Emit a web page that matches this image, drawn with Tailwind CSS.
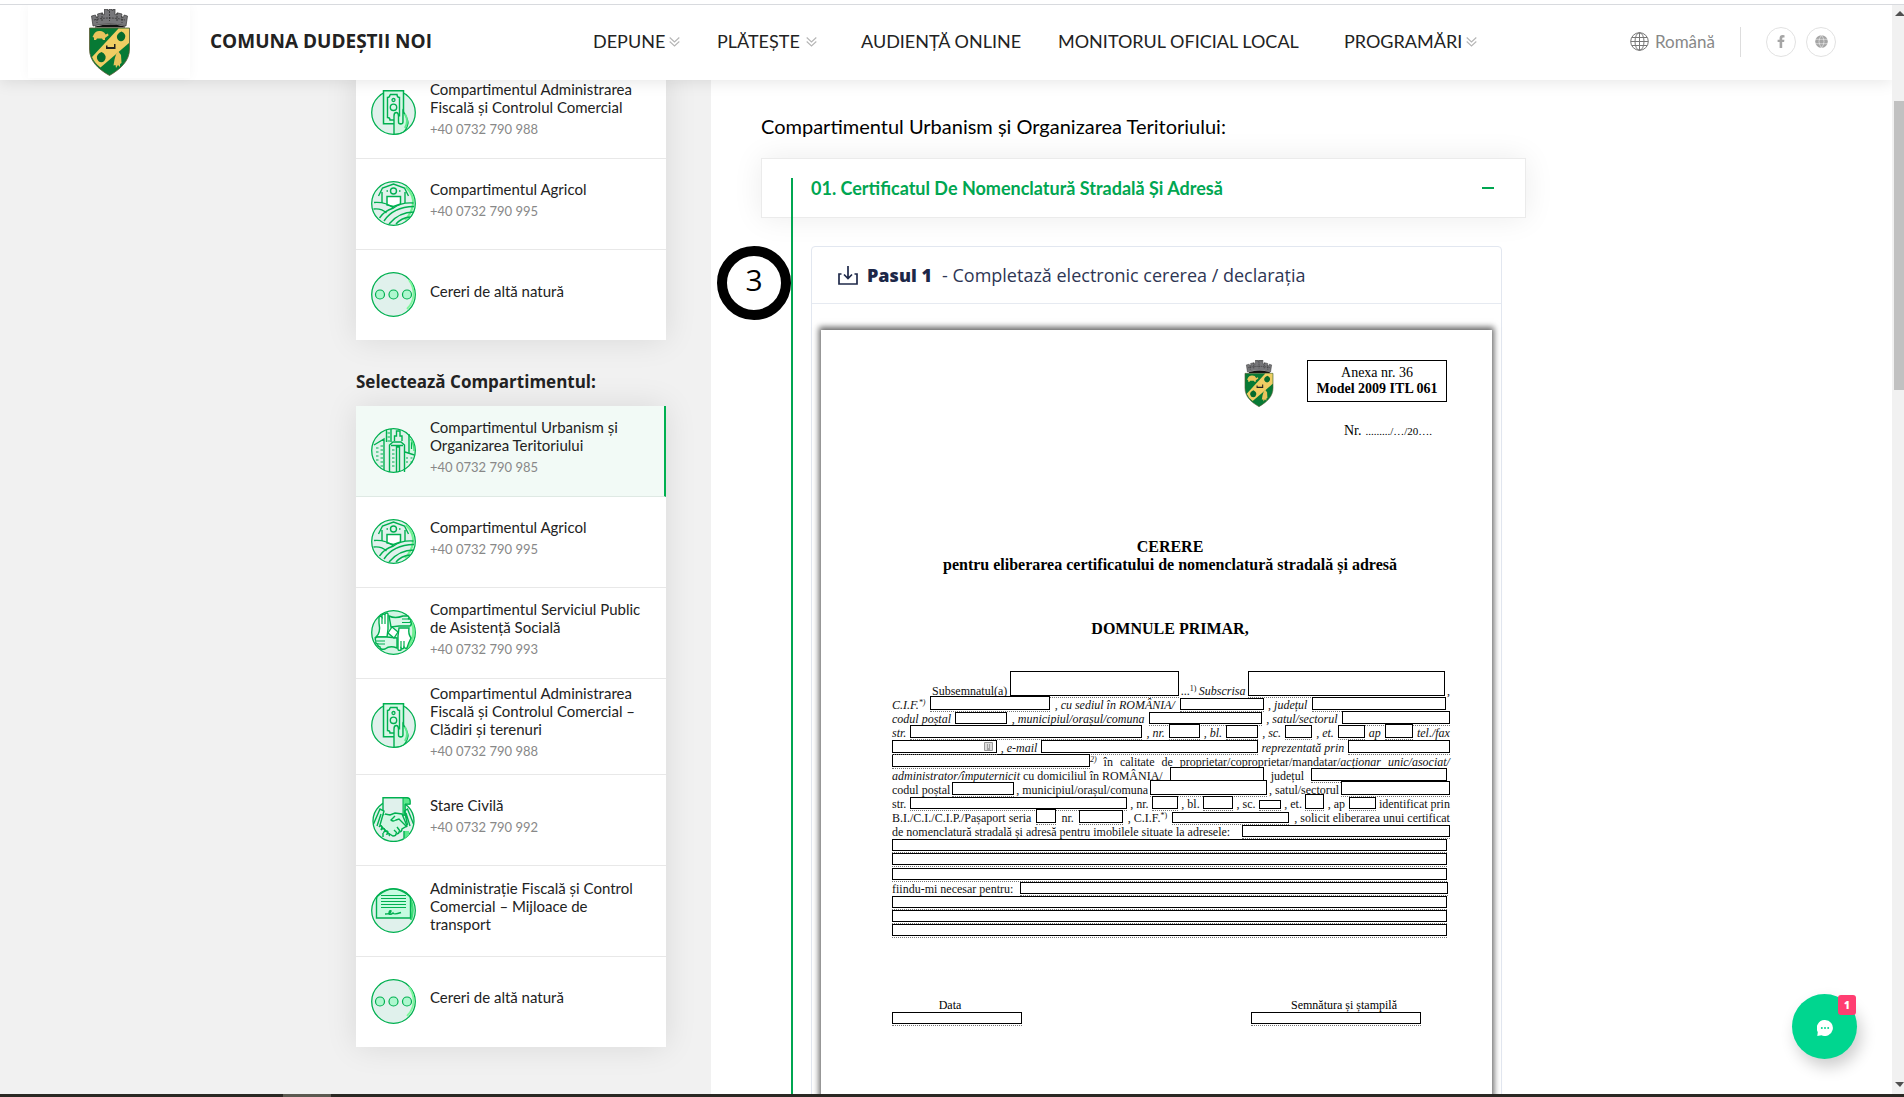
<!DOCTYPE html>
<html lang="ro">
<head>
<meta charset="utf-8">
<meta name="viewport" content="width=device-width, initial-scale=1">
<title>Comuna Dudeștii Noi</title>
<script src="https://cdn.jsdelivr.net/npm/@tailwindcss/browser@4"></script>
</head>
<body class="bg-white font-[Lato,sans-serif] text-[#222]">

<svg class="hidden" aria-hidden="true">
  <symbol id="coat" viewBox="0 0 41 67">
    <path d="M4 17 2.500 7l4-1 .6 2.500 2-.4L8.500 5l5-1.200.6 2 1.400-.2V0h3v1.500h1.500V0h3v1.500H24V0h2v5.600l1.600.2.500-2L33 5l-.6 3 2 .5.700-2.500 3.400 1L37 17Q20 13 4 17Z" fill="#77777a" stroke="#333" stroke-width=".7"/>
    <path d="M5 11q15-4 31 0M13 4v9M20.500 2v10M28 4v9M8 7v7M33 7v7" stroke="#2f2f2f" stroke-width=".8" fill="none" stroke-dasharray="2 1"/>
    <path d="M6 17.500q15-4 30 0v1H6z" fill="#111"/>
    <path d="M.5 19h40v21c0 12-9 20-20 26.500C9 60 .5 52 .5 40Z" fill="#077a35" stroke="#5d5a33" stroke-width=".8"/>
    <path d="M29.500 19.400H40V34L11.500 58.500Q5.500 54 3 48Z" fill="#f0cd63"/>
    <path d="M5 25q2-3.500 6-3 4 0 5.500 3.500l2.500-1 .5 2-3.500 2.500v2h-2l-1-1.500H8L7 31H5v-2.500L3.500 28Z" fill="#e9c45c"/>
    <path d="M32.500 22.500q5 2.500 3.500 6.500-1 3-4 3.200-3-.2-4-3.200-1-4 4.500-6.500ZM12.500 43q5 2.500 4 6.500-1 3.500-4.200 3.700-3.300-.2-4.300-3.700-1-4 4.500-6.500Z" fill="#056b2e"/>
    <path d="M17 36.500h1.500v1.500H25v-3h1.500v5H17Z" fill="#222"/>
    <path d="m29 42 3 4 .5 8-1.500 1v3l-2-2-2 3-.5-3-2 .5 1-6 1.500-5Z" fill="#e9c45c"/>
  </symbol>
  <symbol id="ic-money" viewBox="0 0 45 45">
    <circle cx="22.500" cy="22.500" r="21.800" fill="#e0f1ec" stroke="#00b050" stroke-width="1.300"/>
    <path d="M12.500.8h20v33h-20z" fill="#d6f8e6" stroke="#00b050" stroke-width="1.500"/>
    <path d="M19 4.500h7c0 2 1 3 2.500 3v19M19 4.500c0 2-1 3-2.500 3v20c1.500 0 2.500 1 2.500 2.500h4" fill="#e0f1ec" stroke="#00b050" stroke-width="1.400"/>
    <circle cx="22.500" cy="10" r="1.500" fill="none" stroke="#00b050" stroke-width="1.300"/><circle cx="22.500" cy="17.300" r="3.200" fill="none" stroke="#00b050" stroke-width="1.400"/>
    <path d="M23 44V26q0-3.500 2.200-3.500T27.500 26v6q0 2 2.200 2t2.300-2V21q5 8 5 12-1 6-4.500 9-4 2.500-9.500 2Z" fill="#d2f5e2" stroke="#00b050" stroke-width="1.400"/>
    <path d="M34 24q4 7 0 14" fill="none" stroke="#5de88c" stroke-width="2"/>
  </symbol>
  <symbol id="ic-farm" viewBox="0 0 45 45">
    <circle cx="22.500" cy="22.500" r="21.800" fill="#e0f1ec" stroke="#00b050" stroke-width="1.300"/>
    <path d="M35 6q8 8 7 17t-8 16" fill="none" stroke="#6ff090" stroke-width="2.200"/>
    <path d="M11 22V11M7.500 15l4-8L22.500 3l11 4 4 8M34 22V11" fill="none" stroke="#00b050" stroke-width="1.400"/>
    <circle cx="22.500" cy="10" r="3" fill="#e0f1ec" stroke="#00b050" stroke-width="1.400"/>
    <path d="M15.500 10h1.500M28 10h1.500" stroke="#00b050" stroke-width="1.300"/>
    <path d="M16 24v-8.500h13.500V23l-7 2.500Z" fill="#fff" stroke="#00b050" stroke-width="1.500"/>
    <path d="M3 21.500q11-1 19.500 5.500 8-6 20-5M2.500 28q8-1 13 4M22.500 27Q13 30 8.500 37M43 25.500Q22 26 13 40M43 31q-15 0-25 12M39 36q-9 1-14 7" fill="none" stroke="#00b050" stroke-width="1.400"/>
  </symbol>
  <symbol id="ic-dots" viewBox="0 0 45 45">
    <circle cx="22.500" cy="22.500" r="21.800" fill="#e0f1ec" stroke="#00b050" stroke-width="1.300"/>
    <path d="M38 8q5 7 4.500 15T36 37" fill="none" stroke="#7df79b" stroke-width="1.800"/>
    <g fill="#aef7cf" stroke="#00b050" stroke-width="1.200"><circle cx="9" cy="22.500" r="4.500"/><circle cx="22.500" cy="22.500" r="4.500"/><circle cx="36" cy="22.500" r="4.500"/></g>
  </symbol>
  <symbol id="ic-city" viewBox="0 0 45 45">
    <circle cx="22.500" cy="22.500" r="21.800" fill="#dff3ea" stroke="#00b050" stroke-width="1.300"/>
    <path d="M16 2h5v14h-5zM37 8l6 9v8h-6z" fill="#d2f7e2"/>
    <path d="M15.500 1.500V14M20 1v13M38 6v19M3 17l10-6v31M18.500 44V17l3.500-3h8l3.500 3v27M23.500 13V8h2V3h3.500v5h2v5M20 17.500h12M25.500 44V19h3v25M34 24l9.500 3" fill="none" stroke="#00b050" stroke-width="1.400"/>
    <path d="M5 20h2.500M5 24h2.500M5 28h2.500M5 32h2.500M9.500 18h2.500M9.500 22h2.500M9.500 26h2.500M9.500 30h2.500M9.500 34h2.500M9.500 38h2.500M16.500 5h2.500M16.500 9h2.500M16.500 13h2.500M21 22h2.500M21 26h2.500M21 30h2.500M21 34h2.500M21 38h2.500M35 30h2M35 34h2M39.500 30h2M39.500 34h2M40.500 14v7" stroke="#00b050" stroke-width="1.200"/>
    <path d="M39.500 11q4 6 3.500 12" fill="none" stroke="#45e37b" stroke-width="1.500"/>
  </symbol>
  <symbol id="ic-hands" viewBox="0 0 45 45">
    <circle cx="22.500" cy="22.500" r="21.800" fill="#d5f4e5" stroke="#00b050" stroke-width="1.300"/>
    <path d="M38 8q6 8 4 18t-8 13" fill="none" stroke="#6ff090" stroke-width="2.500"/>
    <path d="M8 13V7q2-1.500 3 0V5q2-2 3 0V4q2-2 3 0v15l-1 8H5q5-4 3-14Z" fill="#fff" stroke="#00b050" stroke-width="1.400"/>
    <path d="M18 6q6 3 14 0h5q2 2 0 3h2q2 2 0 3h1q1 3-1 4H28l-8 1Z" fill="#d9f7e8" stroke="#00b050" stroke-width="1.400"/>
    <path d="M28 18h10q-1 6 2 10-3 6-4 10-2 1-3-1-1 3-3 1v2q-3 1-3-1V26Z" fill="#fff" stroke="#00b050" stroke-width="1.400"/>
    <path d="M26 28v10q-7-3-12 1-5 1-5-2-3-1-2-3-3 0-2-3-2-3 1-4h10Z" fill="#d9f7e8" stroke="#00b050" stroke-width="1.400"/>
    <path d="m21 17 6 5-4 6-6-5Z" fill="#fff" stroke="#00b050" stroke-width="1.300"/>
    <path d="M11 7v7M14 5v9M37 9h-6M39 12.500h-8M33 37v-6M30 38v-7M8 34h6M6 31h8" stroke="#00b050" stroke-width="1.200"/>
  </symbol>
  <symbol id="ic-shake" viewBox="0 0 45 45">
    <circle cx="22.500" cy="24" r="20.500" fill="#e0f1ec" stroke="#00b050" stroke-width="1.300"/>
    <path d="M33 34h5v4l-5 4z" fill="#5de88c"/>
    <path d="M12 .8h24q3 0 3 3V7h-5v11H12Z" fill="#e0f1ec" stroke="#00b050" stroke-width="1.400"/>
    <path d="M32 1h4q3 0 3 3v3h-5v11h-2z" fill="#5de88c" stroke="#00b050" stroke-width="1"/>
    <path d="M2.500 27 9 12l4 2-4 14 8 8 5 3q3 0 3-2 3 0 3-2 3 0 3-3l5-3-5-12-7-1-5 2-5-1" fill="#d2f7e4" stroke="#00b050" stroke-width="1.400"/>
    <path d="m42.500 27-6-15-3 2 3 14M24 19l-4 4q2 2 5 0l3-1 8 8M6 29l4-12M39 29l-4-13M8 30q2-3 3 0l-1 3q3-3 4 0l-1 2q3-2 4 0l-1 2q4-1 2 2M23 33l3 3M26 30l3 4M12 36v4M33 34v7" fill="none" stroke="#00b050" stroke-width="1.400"/>
  </symbol>
  <symbol id="ic-doc" viewBox="0 0 45 45">
    <circle cx="22.500" cy="22.500" r="21.800" fill="#e0f1ec" stroke="#00b050" stroke-width="1.300"/>
    <path d="M38 9q6 10 2 23" fill="none" stroke="#3de077" stroke-width="2.500"/>
    <path d="M8 7Q22-5 37 7q2.500 1 2.500 4v19H5.500V11Q5.500 8 8 7Z" fill="#c6fbe1" stroke="#00b050" stroke-width="1.400"/>
    <path d="M10 7.500h25M10 10.500h25M10 13.500h25M10 16.500h25M10 19.500h25" stroke="#00b050" stroke-width="1.200"/>
    <path d="M14 26q6 0 6-3-2-1-2 3 2 1 4-1 1 2 8-.5" fill="none" stroke="#00b050" stroke-width="1.400"/>
  </symbol>
  <symbol id="chev" viewBox="0 0 11 12">
    <path d="m.7 1.500 4.800 4.500 4.800-4.500M.7 5.500 5.500 10l4.800-4.500" fill="none" stroke="#b5b5b5" stroke-width="1.100"/>
  </symbol>
</svg>

<div class="flex h-screen flex-col overflow-hidden">
  <div class="h-[5px] shrink-0 border-b border-[#d8dade] bg-white"></div>

  <div class="flex min-h-0 flex-1">
    <div class="relative flex min-w-0 flex-1 flex-col overflow-hidden">

      <header class="relative z-10 flex h-[75px] shrink-0 items-center bg-white pb-0.5 shadow-[0_2px_15px_rgba(0,0,0,0.1)]">
        <a href="#" aria-label="Acasă" class="ml-7 flex h-full w-[162px] items-start justify-center bg-white pt-1 shadow-[0_0_12px_rgba(0,0,0,0.04)]">
          <svg class="h-[67px] w-[41px]"><use href="#coat"/></svg>
        </a>
        <a href="#" class="ml-5 w-[383px] font-['Open_Sans',sans-serif] text-[19px] font-bold">COMUNA DUDEȘTII NOI</a>
        <nav class="flex flex-1 items-center pb-0.5 text-lg whitespace-nowrap">
          <a href="#" class="flex w-[124px] items-center gap-1">DEPUNE <svg class="mt-0.5 h-3 w-[11px]"><use href="#chev"/></svg></a>
          <a href="#" class="flex w-[144px] items-center gap-1.5">PLĂTEȘTE <svg class="mt-0.5 h-3 w-[11px]"><use href="#chev"/></svg></a>
          <a href="#" class="w-[197px]">AUDIENȚĂ ONLINE</a>
          <a href="#" class="w-[286px]">MONITORUL OFICIAL LOCAL</a>
          <a href="#" class="flex items-center gap-1">PROGRAMĂRI <svg class="mt-0.5 h-3 w-[11px]"><use href="#chev"/></svg></a>
        </nav>
        <button class="flex items-center gap-1.5 text-[17px] text-[#888]">
          <svg class="size-[19px]" viewBox="0 0 19 19" fill="none" stroke="#777" stroke-width="1"><circle cx="9.500" cy="9.500" r="8.800"/><ellipse cx="9.500" cy="9.500" rx="4.500" ry="8.800"/><path d="M9.500.7v17.600M.7 9.500h17.600M2 5.500h15M2 13.500h15"/></svg>
          Română
        </button>
        <div class="mx-[25px] h-[30px] w-px bg-[#ddd]"></div>
        <div class="mr-14 flex gap-2.5">
          <a href="#" aria-label="Facebook" class="flex size-[30px] items-center justify-center rounded-full border border-[#e2e2e2]">
            <svg class="h-[13px] w-2" viewBox="0 0 8 13"><path d="M7.500.2v2.200H6.200q-1 0-1 1v1.300h2.200L7.100 7H5.200v6H2.600V7H.6V4.700h2V3Q2.600.1 5.600.1Z" fill="#a5a5a5"/></svg>
          </a>
          <a href="#" aria-label="Site" class="flex size-[30px] items-center justify-center rounded-full border border-[#e2e2e2]">
            <svg class="size-[13px]" viewBox="0 0 13 13"><circle cx="6.500" cy="6.500" r="6.300" fill="#a5a5a5"/><path d="M0 4.300h13M0 8.700h13M6.500.2q-5 6.300 0 12.600 5-6.300 0-12.600" fill="none" stroke="#fff" stroke-width=".5"/></svg>
          </a>
        </div>
      </header>

      <div class="-mt-3 flex min-h-0 flex-1">
        <aside class="flex w-[711px] shrink-0 flex-col items-end bg-[#f1f1f1] pr-[45px]">
          <div class="w-[310px]">
            <div class="bg-white text-[15px] leading-[18px] shadow-[0_0_30px_rgba(0,0,0,0.1)]">
              <a href="#" class="flex min-h-[91px] items-center gap-3.5 border-b border-[#e8e8e8] px-[15px] pb-0.5">
                <svg class="size-[45px] shrink-0"><use href="#ic-money"/></svg>
                <div class="pb-1.5"><h4>Compartimentul Administrarea Fiscală și Controlul Comercial</h4><p class="mt-[3px] text-[13px] leading-5 text-[#888]">+40 0732 790 988</p></div>
              </a>
              <a href="#" class="flex min-h-[91px] items-center gap-3.5 border-b border-[#e8e8e8] px-[15px] pb-0.5">
                <svg class="size-[45px] shrink-0"><use href="#ic-farm"/></svg>
                <div class="pb-1.5"><h4>Compartimentul Agricol</h4><p class="mt-[3px] text-[13px] leading-5 text-[#888]">+40 0732 790 995</p></div>
              </a>
              <a href="#" class="flex min-h-[90px] items-center gap-3.5 px-[15px] pb-0.5">
                <svg class="size-[45px] shrink-0"><use href="#ic-dots"/></svg>
                <div class="pb-1.5"><h4>Cereri de altă natură</h4></div>
              </a>
            </div>

            <h3 class="pt-[30px] pb-3 font-['Open_Sans',sans-serif] text-[17px] leading-6 font-bold">Selectează Compartimentul:</h3>

            <div class="bg-white text-[15px] leading-[18px] shadow-[0_0_30px_rgba(0,0,0,0.1)]">
              <a href="#" class="flex min-h-[91px] items-center gap-3.5 border-r-2 border-b border-r-[#00b050] border-b-[#dfe9e4] bg-[#f2faf6] pr-[13px] pb-0.5 pl-[15px]">
                <svg class="size-[45px] shrink-0"><use href="#ic-city"/></svg>
                <div class="pb-1.5"><h4>Compartimentul Urbanism și<br>Organizarea Teritoriului</h4><p class="mt-[3px] text-[13px] leading-5 text-[#888]">+40 0732 790 985</p></div>
              </a>
              <a href="#" class="flex min-h-[91px] items-center gap-3.5 border-b border-[#e8e8e8] px-[15px] pb-0.5">
                <svg class="size-[45px] shrink-0"><use href="#ic-farm"/></svg>
                <div class="pb-1.5"><h4>Compartimentul Agricol</h4><p class="mt-[3px] text-[13px] leading-5 text-[#888]">+40 0732 790 995</p></div>
              </a>
              <a href="#" class="flex min-h-[91px] items-center gap-3.5 border-b border-[#e8e8e8] px-[15px] pb-0.5">
                <svg class="size-[45px] shrink-0"><use href="#ic-hands"/></svg>
                <div class="pb-1.5"><h4>Compartimentul Serviciul Public<br>de Asistență Socială</h4><p class="mt-[3px] text-[13px] leading-5 text-[#888]">+40 0732 790 993</p></div>
              </a>
              <a href="#" class="flex min-h-[96px] items-center gap-3.5 border-b border-[#e8e8e8] px-[15px] pb-0.5">
                <svg class="size-[45px] shrink-0"><use href="#ic-money"/></svg>
                <div class="pb-1.5"><h4>Compartimentul Administrarea<br>Fiscală și Controlul Comercial –<br>Clădiri și terenuri</h4><p class="mt-[3px] text-[13px] leading-5 text-[#888]">+40 0732 790 988</p></div>
              </a>
              <a href="#" class="flex min-h-[91px] items-center gap-3.5 border-b border-[#e8e8e8] px-[15px] pb-0.5">
                <svg class="size-[45px] shrink-0"><use href="#ic-shake"/></svg>
                <div class="pb-1.5"><h4>Stare Civilă</h4><p class="mt-[3px] text-[13px] leading-5 text-[#888]">+40 0732 790 992</p></div>
              </a>
              <a href="#" class="flex min-h-[91px] items-center gap-3.5 border-b border-[#e8e8e8] px-[15px] pb-0.5">
                <svg class="size-[45px] shrink-0"><use href="#ic-doc"/></svg>
                <div class="pb-2"><h4>Administrație Fiscală și Control<br>Comercial – Mijloace de<br>transport</h4></div>
              </a>
              <a href="#" class="flex min-h-[90px] items-center gap-3.5 px-[15px] pb-0.5">
                <svg class="size-[45px] shrink-0"><use href="#ic-dots"/></svg>
                <div class="pb-2"><h4>Cereri de altă natură</h4></div>
              </a>
            </div>
          </div>
        </aside>

        <main class="min-w-0 flex-1 pt-[46px] pl-[50px]">
          <h2 class="pb-5 text-[20px] leading-6 text-black">Compartimentul Urbanism și Organizarea Teritoriului:</h2>

          <section class="relative w-[765px]">
            <button class="flex h-[60px] w-full items-center justify-between border border-[#ebebeb] bg-white pr-[31px] pl-[49px] text-lg font-bold text-[#00a651] shadow-[0_0_30px_rgba(0,0,0,0.08)]" aria-expanded="true">
              <span>01. Certificatul De Nomenclatură Stradală Și Adresă</span>
              <span class="h-0.5 w-3 bg-[#00a651]"></span>
            </button>
            <div class="absolute top-5 left-[30px] h-[1100px] w-0.5 bg-[#00a651]"></div>
            <div class="absolute top-[88px] -left-11 flex size-[74px] items-center justify-center rounded-full border-[10px] border-black bg-white pb-1.5 font-['Open_Sans',sans-serif] text-3xl text-black">3</div>

            <div class="mt-7 ml-[50px] w-[691px] rounded border border-[#e2e7f0]">
              <div class="flex h-[57px] items-center border-b border-[#e6eaf1] pl-[26px] font-['Open_Sans',sans-serif] text-lg text-[#2e3654]">
                <svg class="h-[19px] w-5" viewBox="0 0 20 19" fill="none" stroke="#1f2a4a" stroke-width="1.700"><path d="M3.500 8H1v10h18V8h-2.500M10 0v12M6 8.500l4 4 4-4"/></svg>
                <b class="ml-[9px] font-extrabold text-[#1c2748]">Pasul 1</b>
                <span class="ml-2.5">- Completază electronic cererea / declarația</span>
              </div>

              <form class="mx-[9px] mt-[26px] h-[900px] bg-white pt-[30px] pr-11 pl-[71px] font-['Liberation_Serif',serif] text-[12px] text-black shadow-[0_-1px_6px_2px_rgba(0,0,0,0.6)]">
                <div class="flex items-start justify-end gap-8 pr-px">
                  <svg class="h-[47px] w-8"><use href="#coat"/></svg>
                  <div class="w-[140px] border border-black py-1 text-center text-sm leading-4"><p>Anexa nr. 36</p><p class="font-bold">Model 2009 ITL 061</p></div>
                </div>
                <p class="mt-3.5 flex items-baseline justify-end gap-1 pr-4 text-sm leading-5">Nr. <span class="text-[11px]">........./…/20….</span></p>
                <div class="mt-[97px] text-center text-base leading-[18px] font-bold">
                  <h3>CERERE</h3>
                  <p>pentru eliberarea certificatului de nomenclatură stradală și adresă</p>
                  <p class="mt-[46px]">DOMNULE PRIMAR,</p>
                </div>

                <div class="-mr-0.5 mt-[46px] grid h-[254px] grid-rows-18 leading-[14px] whitespace-pre text-[#111]">
                  <div class="flex items-end justify-between pl-10"><span>Subsemnatul(a)</span><span class="flex border-b border-dotted border-[#777] pb-px"><input aria-label="Subsemnatul(a)" class="h-[25px] w-[169px] border border-black bg-white"></span><span>...<sup class="text-[8px]">1)</sup></span><i>Subscrisa</i><span class="flex border-b border-dotted border-[#777] pb-px"><input aria-label="Subscrisa" class="h-[25px] w-[197px] border border-black bg-white"></span><span>,</span></div>
                  <div class="flex items-end justify-between pr-1"><i>C.I.F.<sup class="text-[8px]">*)</sup></i><span class="flex border-b border-dotted border-[#777] pb-px"><input aria-label="C.I.F." class="h-[14px] w-[120px] border border-black bg-white"></span><i>, cu sediul în ROMÂNIA/</i><span class="flex border-b border-dotted border-[#777] pb-px"><input aria-label="Sediul" class="h-3 w-[84px] border border-black bg-white"></span><i>, județul</i><span class="flex border-b border-dotted border-[#777] pb-px"><input aria-label="Județul" class="h-[13px] w-[134px] border border-black bg-white"></span></div>
                  <div class="flex items-end justify-between"><i>codul poștal</i><span class="flex border-b border-dotted border-[#777] pb-px"><input aria-label="Codul poștal" class="h-3 w-[52px] border border-black bg-white"></span><i>, municipiul/orașul/comuna</i><span class="flex border-b border-dotted border-[#777] pb-px"><input aria-label="Municipiul" class="h-3 w-[113px] border border-black bg-white"></span><i>, satul/sectorul</i><span class="flex border-b border-dotted border-[#777] pb-px"><input aria-label="Satul/sectorul" class="h-[13px] w-[108px] border border-black bg-white"></span></div>
                  <div class="flex items-end justify-between"><i>str.</i><span class="flex border-b border-dotted border-[#777] pb-px"><input aria-label="Strada" class="h-[13px] w-[232px] border border-black bg-white"></span><i>, nr.</i><span class="flex border-b border-dotted border-[#777] pb-px"><input aria-label="Nr." class="h-[14px] w-[31px] border border-black bg-white"></span><i>, bl.</i><span class="flex border-b border-dotted border-[#777] pb-px"><input aria-label="Bl." class="h-[13px] w-[32px] border border-black bg-white"></span><i>, sc.</i><span class="flex border-b border-dotted border-[#777] pb-px"><input aria-label="Sc." class="h-[13px] w-[27px] border border-black bg-white"></span><i>, et.</i><span class="flex border-b border-dotted border-[#777] pb-px"><input aria-label="Et." class="h-[13px] w-[27px] border border-black bg-white"></span><i>ap</i><span class="flex border-b border-dotted border-[#777] pb-px"><input aria-label="Ap." class="h-[14px] w-[28px] border border-black bg-white"></span><i>tel./fax</i></div>
                  <div class="flex items-end justify-between"><span class="relative flex border-b border-dotted border-[#777] pb-px"><input aria-label="Tel./fax" class="h-[13px] w-[105px] border border-black bg-white"><svg class="absolute top-0.5 right-1 size-[9px]" viewBox="0 0 9 9"><path d="M.5.5h8v8h-8z" fill="#ddd" stroke="#999"/><path d="M3 3h1M5 3h1M3 5h1M5 5h1M3 7h3" stroke="#666"/></svg></span><i>, e-mail</i><span class="flex border-b border-dotted border-[#777] pb-px"><input aria-label="E-mail" class="h-[13px] w-[217px] border border-black bg-white"></span><i>reprezentată prin</i><span class="flex border-b border-dotted border-[#777] pb-px"><input aria-label="Reprezentată prin" class="h-[13px] w-[102px] border border-black bg-white"></span></div>
                  <div class="flex items-end justify-between"><span class="flex"><span class="flex border-b border-dotted border-[#777] pb-px"><input aria-label="Reprezentant" class="h-[13px] w-[198px] border border-black bg-white"></span><i class="text-[8px] leading-[11px]">2)</i></span><span>în</span><span>calitate</span><span>de</span><span>proprietar/coproprietar/mandatar/<i>acționar</i></span><i>unic/asociat/</i></div>
                  <div class="flex items-end justify-between pr-[3px]"><span><i>administrator/împuternicit</i> cu domiciliul în ROMÂNIA/</span><span class="flex border-b border-dotted border-[#777] pb-px"><input aria-label="Domiciliul" class="h-[14px] w-[94px] border border-black bg-white"></span><span>județul</span><span class="flex border-b border-dotted border-[#777] pb-px"><input aria-label="Județul de domiciliu" class="h-[13px] w-[136px] border border-black bg-white"></span></div>
                  <div class="flex items-end justify-between"><span>codul poștal</span><span class="flex border-b border-dotted border-[#777] pb-px"><input aria-label="Codul poștal de domiciliu" class="h-[13px] w-[62px] border border-black bg-white"></span><span>, municipiul/orașul/comuna</span><span class="flex border-b border-dotted border-[#777] pb-px"><input aria-label="Municipiul de domiciliu" class="h-[15px] w-[117px] border border-black bg-white"></span><span>, satul/sectorul</span><span class="flex border-b border-dotted border-[#777] pb-px"><input aria-label="Satul de domiciliu" class="h-[14px] w-[109px] border border-black bg-white"></span></div>
                  <div class="flex items-end justify-between"><span>str.</span><span class="flex border-b border-dotted border-[#777] pb-px"><input aria-label="Strada de domiciliu" class="h-3 w-[217px] border border-black bg-white"></span><span>, nr.</span><span class="flex border-b border-dotted border-[#777] pb-px"><input aria-label="Nr. domiciliu" class="h-[13px] w-[26px] border border-black bg-white"></span><span>, bl.</span><span class="flex border-b border-dotted border-[#777] pb-px"><input aria-label="Bl. domiciliu" class="h-[13px] w-[30px] border border-black bg-white"></span><span>, sc.</span><span class="flex border-b border-dotted border-[#777] pb-px"><input aria-label="Sc. domiciliu" class="h-[9px] w-[22px] border border-black bg-white"></span><span>, et.</span><span class="flex border-b border-dotted border-[#777] pb-px"><input aria-label="Et. domiciliu" class="h-[15px] w-[19px] border border-black bg-white"></span><span>, ap</span><span class="flex border-b border-dotted border-[#777] pb-px"><input aria-label="Ap. domiciliu" class="h-[12px] w-[27px] border border-black bg-white"></span><span>identificat prin</span></div>
                  <div class="flex items-end justify-between"><span>B.I./C.I./C.I.P./Pașaport seria</span><span class="flex border-b border-dotted border-[#777] pb-px"><input aria-label="Seria" class="h-[14px] w-5 border border-black bg-white"></span><span>nr.</span><span class="flex border-b border-dotted border-[#777] pb-px"><input aria-label="Numărul" class="h-[13px] w-[44px] border border-black bg-white"></span><span>, C.I.F.<sup class="text-[8px]">*)</sup></span><span class="flex border-b border-dotted border-[#777] pb-px"><input aria-label="C.I.F. solicitant" class="h-[11px] w-[117px] border border-black bg-white"></span><span>, solicit eliberarea unui certificat</span></div>
                  <div class="flex items-end justify-between"><span>de nomenclatură stradală și adresă pentru imobilele situate la adresele:</span><span class="flex border-b border-dotted border-[#777] pb-px"><input aria-label="Adresele imobilelor" class="h-3 w-[208px] border border-black bg-white"></span></div>
                  <div class="mr-[3px] flex flex-col justify-end border-b border-dotted border-[#777] pb-px"><input aria-label="Adresa, rândul 2" class="h-3 border border-black bg-white"></div>
                  <div class="mr-[3px] flex flex-col justify-end border-b border-dotted border-[#777] pb-px"><input aria-label="Adresa, rândul 3" class="h-3 border border-black bg-white"></div>
                  <div class="mr-[3px] flex flex-col justify-end border-b border-dotted border-[#777] pb-px"><input aria-label="Adresa, rândul 4" class="h-3 border border-black bg-white"></div>
                  <div class="flex items-end justify-between pr-0.5"><span>fiindu-mi necesar pentru:</span><span class="flex border-b border-dotted border-[#777] pb-px"><input aria-label="Fiindu-mi necesar pentru" class="h-3 w-[428px] border border-black bg-white"></span></div>
                  <div class="mr-[3px] flex flex-col justify-end border-b border-dotted border-[#777] pb-px"><input aria-label="Motivul, rândul 2" class="h-3 border border-black bg-white"></div>
                  <div class="mr-[3px] flex flex-col justify-end border-b border-dotted border-[#777] pb-px"><input aria-label="Motivul, rândul 3" class="h-3 border border-black bg-white"></div>
                  <div class="mr-[3px] flex flex-col justify-end border-b border-dotted border-[#777] pb-px"><input aria-label="Motivul, rândul 4" class="h-3 border border-black bg-white"></div>
                </div>

                <div class="mt-[60px] flex justify-between pr-[27px] text-center leading-[14px]">
                  <label class="flex w-[130px] flex-col"><span class="pr-3.5">Data</span><span class="flex border-b border-dotted border-[#777] pb-px"><input class="h-[12px] w-full border border-black bg-white"></span></label>
                  <label class="flex w-[170px] flex-col"><span class="pl-4">Semnătura și ștampilă</span><span class="flex border-b border-dotted border-[#777] pb-px"><input class="h-[12px] w-full border border-black bg-white"></span></label>
                </div>
              </form>
            </div>
          </section>
        </main>
      </div>

      <button aria-label="Deschide chat" class="absolute right-[35px] bottom-[35px] z-20 flex size-[65px] items-center justify-center rounded-full bg-[#00d68f] shadow-[4px_8px_16px_rgba(0,0,0,0.2)]">
        <svg class="mt-0.5 size-4" viewBox="0 0 16 16"><path d="M8 0a8 8 0 1 1-3.600 15.200L.3 16 .8 12A8 8 0 0 1 8 0Z" fill="#fff"/><g fill="#00d68f"><circle cx="4.800" cy="8" r="1"/><circle cx="8" cy="8" r="1"/><circle cx="11.200" cy="8" r="1"/></g></svg>
        <span class="absolute top-px right-px flex h-5 w-[18px] items-center justify-center rounded-[3px] bg-[#ff3d71] font-['Open_Sans',sans-serif] text-[10px] font-extrabold text-white">1</span>
      </button>
    </div>

    <div class="flex w-3 shrink-0 flex-col items-end bg-[#f1f1f1]" aria-hidden="true">
      <svg class="mt-1.5 h-[5px] w-2.5 shrink-0" viewBox="0 0 10 5"><path d="M1 5 6 0l4 4v1Z" fill="#505050"/></svg>
      <div class="mt-[85px] h-[289px] w-2.5 shrink-0 bg-[#c1c1c1]"></div>
      <svg class="mt-auto mb-[7px] h-[5px] w-2.5 shrink-0" viewBox="0 0 10 5"><path d="M1 0h9L6 5Z" fill="#505050"/></svg>
    </div>
  </div>

  <div class="h-[3px] shrink-0 bg-[#2a2823] pl-[283px]"><div class="h-full w-12 bg-[#5b5950]"></div></div>
</div>
</body>
</html>
